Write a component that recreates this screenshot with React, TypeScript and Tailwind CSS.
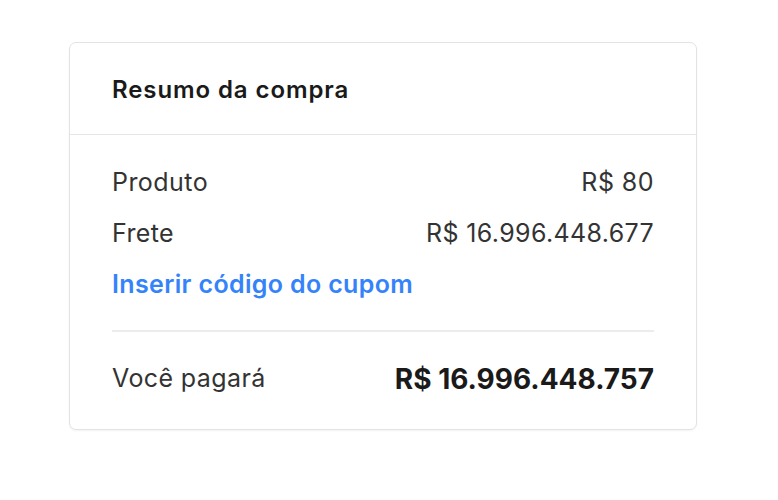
export default function App() {
  return (
    <div className="w-[778px] h-[500px] bg-white pt-[42px] pl-[69px]" style={{ fontFamily: "Inter, 'Noto Sans', sans-serif" }}>
      <div className="w-[628px] h-[388px] rounded-[7px] border border-[#e3e3e3] bg-white shadow-[0_1px_2px_rgba(0,0,0,0.05)] flex flex-col">
        <div className="h-[92px] flex items-center px-[42px] border-b-[1.5px] border-[#e6e6e6]">
          <span className="text-[24px] font-semibold tracking-[0.9px] text-[#1a1a1a] leading-none pt-[2px]">Resumo da compra</span>
        </div>
        <div className="px-[42px] pt-[22px] flex flex-col">
          <div className="h-[51px] flex items-center justify-between text-[25px] tracking-[0.45px] text-[#333] leading-none">
            <span>Produto</span>
            <span>R$ 80</span>
          </div>
          <div className="h-[51px] flex items-center justify-between text-[25px] tracking-[0.35px] text-[#333] leading-none">
            <span>Frete</span>
            <span>R$ 16.996.448.677</span>
          </div>
          <div className="h-[51px] flex items-center text-[25px] font-semibold tracking-[0.35px] text-[#3483fa] leading-none">
            <span>Inserir código do cupom</span>
          </div>
          <div className="border-t-2 border-[#ececec] mt-[20px]" />
          <div className="flex items-center justify-between h-[92px] leading-none">
            <span className="text-[25px] tracking-[0.4px] text-[#333]">Você pagará</span>
            <span className="text-[28px] font-bold tracking-[0px] text-[#1a1a1a] pt-[2px]">R$ 16.996.448.757</span>
          </div>
        </div>
      </div>
    </div>
  );
}
